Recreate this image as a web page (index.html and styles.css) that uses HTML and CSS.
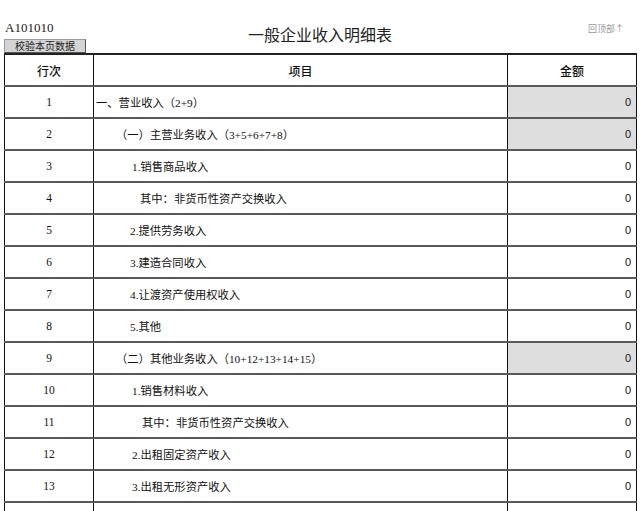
FILE: index.html
```html
<!DOCTYPE html>
<html lang="zh">
<head>
<meta charset="utf-8">
<title>一般企业收入明细表</title>
<link rel="stylesheet" href="styles.css">
</head>
<body>
<div class="page">
  <div class="head">
    <div class="head-left">
      <div class="code">A101010</div>
      <button class="check">校验本页数据</button>
    </div>
    <h1 class="title">一般企业收入明细表</h1>
    <a class="top-link">回顶部↑</a>
  </div>
  <table class="sheet">
    <colgroup><col class="c1"><col class="c2"><col class="c3"></colgroup>
    <thead>
      <tr><th>行次</th><th>项目</th><th>金额</th></tr>
    </thead>
    <tbody>
      <tr><td class="no">1</td><td class="item i0">一、营业收入（2+9）</td><td class="amt calc">0</td></tr>
      <tr><td class="no">2</td><td class="item i1">（一）主营业务收入（3+5+6+7+8）</td><td class="amt calc">0</td></tr>
      <tr><td class="no">3</td><td class="item i2">1.销售商品收入</td><td class="amt">0</td></tr>
      <tr><td class="no">4</td><td class="item i3">其中：非货币性资产交换收入</td><td class="amt">0</td></tr>
      <tr><td class="no">5</td><td class="item i2b">2.提供劳务收入</td><td class="amt">0</td></tr>
      <tr><td class="no">6</td><td class="item i2b">3.建造合同收入</td><td class="amt">0</td></tr>
      <tr><td class="no">7</td><td class="item i2b">4.让渡资产使用权收入</td><td class="amt">0</td></tr>
      <tr><td class="no">8</td><td class="item i2b">5.其他</td><td class="amt">0</td></tr>
      <tr><td class="no">9</td><td class="item i1">（二）其他业务收入（10+12+13+14+15）</td><td class="amt calc">0</td></tr>
      <tr><td class="no">10</td><td class="item i2">1.销售材料收入</td><td class="amt">0</td></tr>
      <tr><td class="no">11</td><td class="item i3b">其中：非货币性资产交换收入</td><td class="amt">0</td></tr>
      <tr><td class="no">12</td><td class="item i2">2.出租固定资产收入</td><td class="amt">0</td></tr>
      <tr><td class="no">13</td><td class="item i2">3.出租无形资产收入</td><td class="amt">0</td></tr>
      <tr><td class="no"></td><td class="item"></td><td class="amt"></td></tr>
    </tbody>
  </table>
</div>
</body>
</html>
```

FILE: styles.css
```css
html, body {
  margin: 0;
  padding: 0;
  background: #fff;
  overflow: hidden;
}
.page {
  padding: 0 4px;
  font-family: "Liberation Serif", "Noto Sans CJK SC", serif;
  color: #111;
}
.head {
  display: grid;
  grid-template-columns: 1fr auto 1fr;
  height: 53px;
}
.head-left {
  display: flex;
  flex-direction: column;
  align-items: flex-start;
  padding-top: 20px;
}
.code {
  font-size: 13px;
  line-height: 16px;
  padding-left: 1px;
  color: #222;
}
.check {
  margin: 3px 0 0 0;
  width: 82px;
  height: 14px;
  padding: 0;
  font-family: "Noto Sans CJK SC", sans-serif;
  font-size: 10px;
  line-height: 12px;
  color: #222;
  background: #d4d4d4;
  border: 1px solid #9a9a9a;
  border-right-color: #555;
  border-bottom-color: #555;
}
.title {
  margin: 0;
  align-self: end;
  padding-bottom: 10px;
  font-family: "Noto Sans CJK SC", sans-serif;
  font-weight: 400;
  font-size: 16px;
  line-height: 18px;
  color: #222;
}
.top-link {
  justify-self: end;
  padding-top: 23px;
  margin-right: 12px;
  font-family: "Noto Sans CJK SC", sans-serif;
  font-size: 9px;
  line-height: 12px;
  color: #999;
}
.sheet {
  width: 632px;
  table-layout: fixed;
  border-collapse: collapse;
  font-size: 12px;
}
.c1 { width: 89px; }
.c2 { width: 414px; }
.c3 { width: 129px; }
.sheet th,
.sheet td {
  height: 30px;
  padding: 0;
  border-top: 2px solid #5a5a5a;
  border-bottom: 2px solid #5a5a5a;
  border-left: 1px solid #111;
  border-right: 1px solid #111;
  vertical-align: middle;
}
.sheet th {
  font-family: "Noto Sans CJK SC", sans-serif;
  font-weight: 500;
  font-size: 12px;
  text-align: center;
  border-top: 2px solid #222;
}
.no {
  text-align: center;
  font-size: 11.5px;
}
.item {
  font-family: "Liberation Serif", "Noto Sans CJK SC", serif;
  font-size: 11.3px;
  white-space: nowrap;
}
.i0 { padding-left: 2px !important; }
.i1 { padding-left: 22px !important; }
.i2 { padding-left: 38px !important; }
.i2b { padding-left: 36px !important; }
.i3 { padding-left: 46px !important; }
.i3b { padding-left: 48px !important; }
.amt {
  text-align: right;
  padding-right: 5px !important;
  font-family: "Liberation Sans", sans-serif;
  font-size: 11px;
}
.calc {
  background: #dedede;
}
```
